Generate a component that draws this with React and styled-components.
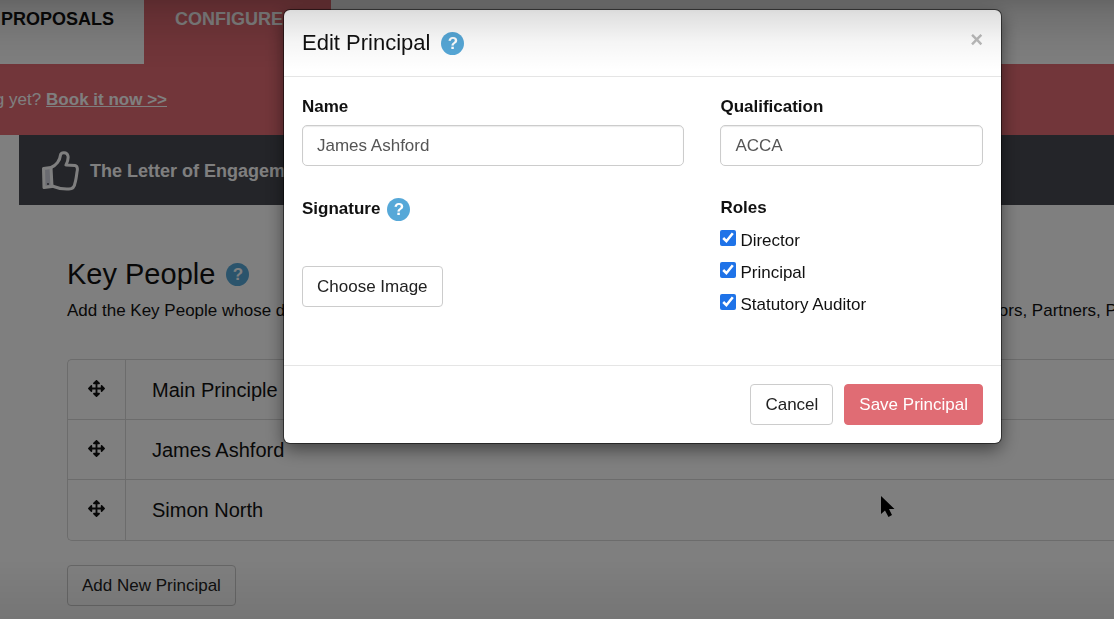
import React, { useState } from "react";
import styled, { createGlobalStyle } from "styled-components";
import { FaArrowsAlt } from "react-icons/fa";

const GlobalStyle = createGlobalStyle`
  * {
    box-sizing: border-box;
  }

  body {
    margin: 0;
    overflow: hidden;
    background: #ffffff;
    color: #111111;
    font-family: "Liberation Sans", Arial, Helvetica, sans-serif;
    font-size: 17px;
    line-height: 24px;
  }
`;

const Page = styled.div`
  min-height: 100vh;
  overflow: hidden;
`;

/* Top navigation */
const Tabs = styled.nav`
  display: flex;
`;

const Tab = styled.a`
  height: 64px;
  padding: ${(props) => (props.$active ? "7px 48px 0 31px" : "7px 30px 0 1px")};
  background: ${(props) => (props.$active ? "#e46c74" : "#ffffff")};
  color: ${(props) => (props.$active ? "#ffffff" : "#111111")};
  font-size: 18px;
  font-weight: bold;
  text-decoration: none;
`;

const Banner = styled.div`
  display: flex;
  padding: 24px 0 23px;
  background: #e46c74;
  color: #ffffff;
`;

/* Keeps the message flush right, the start runs off the page */
const BannerText = styled.div`
  display: flex;
  justify-content: flex-end;
  gap: 5px;
  width: 167px;
  white-space: nowrap;

  a {
    color: inherit;
    font-weight: bold;
  }
`;

const Main = styled.main`
  margin-left: 19px;
`;

const Notice = styled.div`
  display: flex;
  align-items: center;
  gap: 11px;
  height: 70px;
  padding: 2px 0 0 23px;
  background: #484a52;
  color: #ffffff;
  font-size: 18px;
  font-weight: bold;
  white-space: nowrap;
`;

/* Key people section */
const Section = styled.section`
  padding: 50px 0 0 48px;
`;

const SectionTitle = styled.h1`
  display: flex;
  align-items: center;
  gap: 11px;
  margin: 0;
  font-size: 29px;
  font-weight: normal;
  line-height: 38px;
`;

const Intro = styled.p`
  margin: 6px 0 36px;
  white-space: nowrap;
`;

const PeopleList = styled.ul`
  margin: 0 0 24px;
  padding: 0;
  list-style: none;
  border: 1px solid #d8d8d8;
  border-right: none;
  border-radius: 5px 0 0 5px;
`;

const Person = styled.li`
  display: flex;
  height: 60px;
  font-size: 20px;
  border-bottom: 1px solid #d8d8d8;

  &:last-child {
    border-bottom: none;
  }
`;

const Handle = styled.span`
  display: flex;
  justify-content: center;
  width: 58px;
  padding-top: 20px;
  border-right: 1px solid #d8d8d8;
  font-size: 17px;
`;

const PersonName = styled.span`
  padding: 18px 26px;
`;

const Button = styled.button`
  height: 41px;
  padding: 0 14px;
  border: 1px solid ${(props) => (props.$primary ? "#e06c74" : "#cccccc")};
  border-radius: 4px;
  background: ${(props) => (props.$primary ? "#e06c74" : "#ffffff")};
  color: ${(props) => (props.$primary ? "#ffffff" : "#222222")};
  font-family: inherit;
  font-size: 17px;
  cursor: pointer;
`;

const HelpButton = styled.button`
  display: flex;
  align-items: center;
  justify-content: center;
  width: 23px;
  height: 23px;
  padding: 0;
  border: none;
  border-radius: 50%;
  background: #56a8d8;
  color: #ffffff;
  font-family: inherit;
  font-size: 17px;
  font-weight: bold;
  line-height: 23px;
  cursor: pointer;
`;

/* Modal */
const Backdrop = styled.div`
  position: fixed;
  inset: 0;
  padding: 10px 113px 0 284px;
  background: rgba(0, 0, 0, 0.5);
`;

const Modal = styled.div`
  border-radius: 6px;
  background: #ffffff;
  box-shadow: 0 0 0 1px rgba(0, 0, 0, 0.5), 0 6px 18px rgba(0, 0, 0, 0.5);
`;

const ModalHeader = styled.header`
  display: flex;
  align-items: center;
  justify-content: space-between;
  height: 67px;
  padding: 0 18px;
  border-bottom: 1px solid #e5e5e5;
`;

const ModalTitle = styled.h2`
  display: flex;
  align-items: center;
  gap: 11px;
  margin: 0;
  font-size: 22px;
  font-weight: normal;
`;

const CloseButton = styled.button`
  padding: 0 0 6px;
  border: none;
  background: none;
  color: #bbbbbb;
  font-family: inherit;
  font-size: 22px;
  font-weight: bold;
  line-height: 24px;
  cursor: pointer;
`;

const ModalBody = styled.div`
  display: grid;
  grid-template-columns: 383fr 263fr;
  column-gap: 36px;
  row-gap: 30px;
  padding: 18px 18px 41px;
`;

const Field = styled.div`
  display: flex;
  flex-direction: column;
  align-items: flex-start;
`;

const Label = styled.label`
  margin-bottom: 6px;
  font-weight: bold;
`;

const TextInput = styled.input`
  width: 100%;
  height: 41px;
  padding: 0 14px;
  border: 1px solid #cccccc;
  border-radius: 5px;
  background: #ffffff;
  color: #555555;
  font-family: inherit;
  font-size: 17px;
  box-shadow: inset 0 1px 1px rgba(0, 0, 0, 0.08);
`;

const LabelRow = styled.div`
  display: flex;
  align-items: center;
  gap: 7px;
  height: 26px;
  margin-bottom: 44px;
  font-weight: bold;
`;

const Roles = styled.fieldset`
  min-width: 0;
  margin: 0;
  padding: 0;
  border: none;

  legend {
    margin-bottom: 8px;
    padding: 0;
    font-weight: bold;
  }
`;

const Role = styled.label`
  display: flex;
  gap: 4px;
  margin-bottom: 6px;
  line-height: 26px;
`;

const Checkbox = styled.input`
  width: 16px;
  height: 16px;
  margin: 2px 0 0;
  accent-color: #1f73e8;
`;

const ModalFooter = styled.footer`
  display: flex;
  justify-content: flex-end;
  gap: 11px;
  padding: 18px;
  border-top: 1px solid #e5e5e5;
`;

/* Soft shade along the top and bottom edges of the window */
const EdgeShade = styled.div`
  position: fixed;
  inset: 0;
  background: linear-gradient(
      rgba(0, 0, 0, 0.2),
      rgba(0, 0, 0, 0.12) 14px,
      rgba(0, 0, 0, 0.04) 42px,
      transparent 70px
    ),
    linear-gradient(to top, rgba(0, 0, 0, 0.08), transparent 60px);
  pointer-events: none;
`;

const Cursor = styled.svg`
  position: fixed;
  top: 495px;
  left: 880px;
  pointer-events: none;
`;

function ThumbIcon() {
  return (
    <svg width="37" height="40" viewBox="0 0 37 40" fill="none" stroke="#ffffff" strokeWidth="3" strokeLinejoin="round" aria-hidden="true">
      <path d="M1.5 17.5L9 16.5L10 35.5L2 36.5Z" fill="#d5d7e2" />
      <path d="M9 16.5C14 14.5 18 9.5 18.5 4C19 1 25 .5 26 5C26.5 8 25.5 11 24 14L33 14.5C36 15 35.5 19 35 21C34.500 25 34 29 33 32C32.5 36 30 38 27 38C20 38.5 15 37 10 35" />
      <circle cx="6" cy="33" r="1" fill="#484a52" stroke="none" />
    </svg>
  );
}

function Help({ topic }) {
  return <HelpButton type="button" aria-label={`Help: ${topic}`}>?</HelpButton>;
}

const people = ["Main Principle", "James Ashford", "Simon North"];

export default function App() {
  const [name, setName] = useState("James Ashford");
  const [qualification, setQualification] = useState("ACCA");
  const [roles, setRoles] = useState({
    Director: true,
    Principal: true,
    "Statutory Auditor": true,
  });

  const toggleRole = (role) => setRoles({ ...roles, [role]: !roles[role] });

  return (
    <>
      <GlobalStyle />
      <Page>
        <Tabs>
          <Tab href="#proposals">PROPOSALS</Tab>
          <Tab href="#configure" $active>CONFIGURE</Tab>
        </Tabs>
        <Banner>
          <BannerText>
            <span>g yet?</span>
            <a href="#book">Book it now &gt;&gt;</a>
          </BannerText>
        </Banner>
        <Main>
          <Notice>
            <ThumbIcon />
            <span>The Letter of Engagement</span>
          </Notice>
          <Section>
            <SectionTitle>
              Key People <Help topic="Key People" />
            </SectionTitle>
            <Intro>
              Add the Key People whose details will also appear in your Letters of Engagement. These may be the firm's Members, Directors, Partners, Principals
            </Intro>
            <PeopleList>
              {people.map((person) => (
                <Person key={person}>
                  <Handle><FaArrowsAlt /></Handle>
                  <PersonName>{person}</PersonName>
                </Person>
              ))}
            </PeopleList>
            <Button type="button">Add New Principal</Button>
          </Section>
        </Main>
      </Page>

      <Backdrop>
        <Modal role="dialog" aria-modal="true" aria-labelledby="modal-title">
          <ModalHeader>
            <ModalTitle id="modal-title">
              Edit Principal <Help topic="Edit Principal" />
            </ModalTitle>
            <CloseButton type="button" aria-label="Close">×</CloseButton>
          </ModalHeader>
          <ModalBody>
            <Field>
              <Label htmlFor="name">Name</Label>
              <TextInput id="name" value={name} onChange={(e) => setName(e.target.value)} />
            </Field>
            <Field>
              <Label htmlFor="qualification">Qualification</Label>
              <TextInput id="qualification" value={qualification} onChange={(e) => setQualification(e.target.value)} />
            </Field>
            <Field>
              <LabelRow>
                Signature <Help topic="Signature" />
              </LabelRow>
              <Button type="button">Choose Image</Button>
            </Field>
            <Roles>
              <legend>Roles</legend>
              {Object.keys(roles).map((role) => (
                <Role key={role}>
                  <Checkbox type="checkbox" checked={roles[role]} onChange={() => toggleRole(role)} />
                  {role}
                </Role>
              ))}
            </Roles>
          </ModalBody>
          <ModalFooter>
            <Button type="button">Cancel</Button>
            <Button type="button" $primary>Save Principal</Button>
          </ModalFooter>
        </Modal>
      </Backdrop>
      <EdgeShade />
      <Cursor width="16" height="24" viewBox="0 0 16 24" aria-hidden="true">
        <path d="M1 1V19L5 15.500L8.500 22L12 20L9 14H14.500Z" fill="#000000" />
      </Cursor>
    </>
  );
}
